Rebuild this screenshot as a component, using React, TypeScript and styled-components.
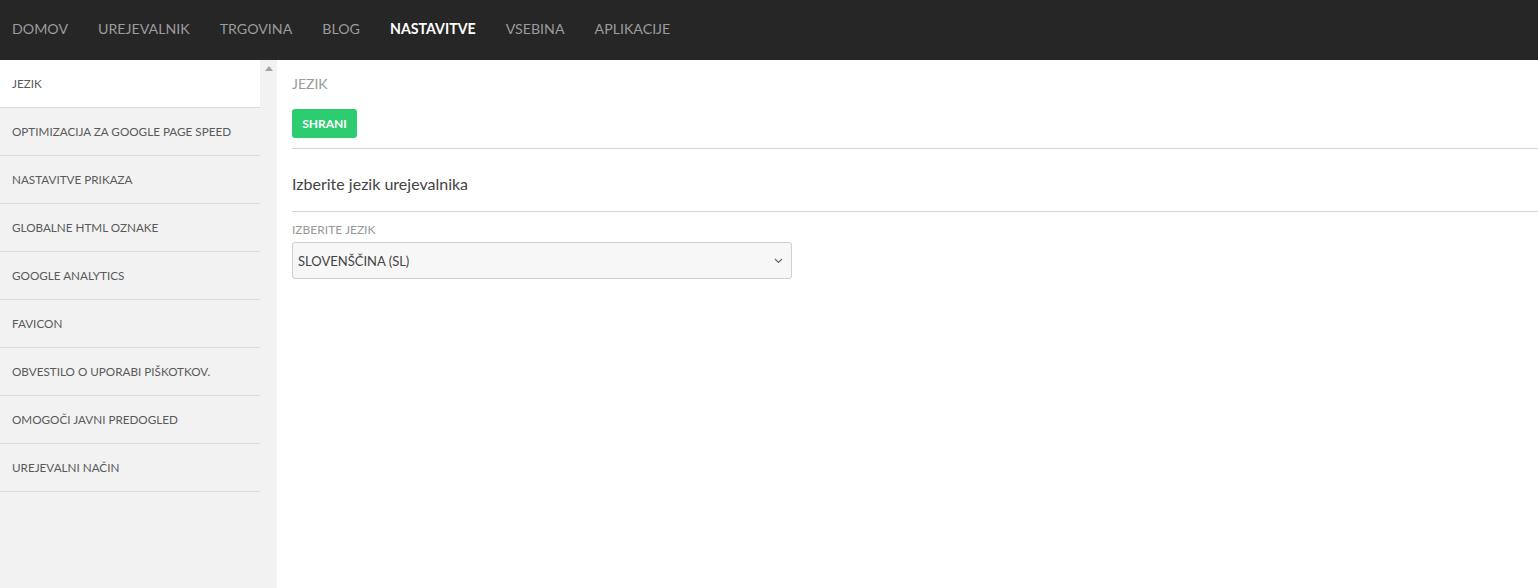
import React from 'react'
import styled, { createGlobalStyle } from 'styled-components'

const GlobalStyle = createGlobalStyle`
  html, body {
    margin: 0;
    padding: 0;
    height: 100%;
    overflow: hidden;
  }
  body {
    font-family: 'Lato', 'Noto Sans', sans-serif;
    background: #fff;
  }
  #root {
    height: 100%;
  }
`

const Page = styled.div`
  display: flex;
  flex-direction: column;
  height: 588px;
`

const TopBar = styled.nav`
  height: 60px;
  flex-shrink: 0;
  box-sizing: border-box;
  padding: 0 0 4px 12px;
  background: #262626;
  display: flex;
  align-items: center;
  gap: 30px;
`

const NavLink = styled.a<{ $active?: boolean }>`
  font-size: 14.2px;
  color: ${p => (p.$active ? '#ffffff' : '#9b9b9b')};
  font-weight: ${p => (p.$active ? 700 : 400)};
  text-decoration: none;
  cursor: pointer;
`

const Body = styled.div`
  flex: 1;
  display: flex;
  min-height: 0;
`

const Sidebar = styled.aside`
  width: 277px;
  flex-shrink: 0;
  display: flex;
  background: #f2f2f2;
`

const Menu = styled.ul`
  list-style: none;
  margin: 0;
  padding: 0;
  width: 260px;
`

const MenuItem = styled.li<{ $active?: boolean }>`
  height: 47px;
  box-sizing: border-box;
  display: flex;
  align-items: center;
  padding: 0 0 2px 12px;
  border-bottom: 1px solid #dcdcdc;
  background: ${p => (p.$active ? '#ffffff' : 'transparent')};
  font-size: 11.7px;
  color: #5a5a5a;
  cursor: pointer;
  height: 48px;
`

const ScrollTrack = styled.div`
  width: 17px;
  display: flex;
  justify-content: center;
  padding-top: 6px;
`

const Main = styled.main`
  flex: 1;
  padding: 16px 0 0 15px;
  display: flex;
  flex-direction: column;
`

const SectionTitle = styled.div`
  font-size: 14px;
  color: #9a9a9a;
  line-height: 16px;
`

const SaveButton = styled.button`
  margin-top: 17px;
  width: 65px;
  height: 29px;
  border: none;
  border-radius: 3px;
  background: #2ecc71;
  color: #fff;
  font-family: inherit;
  font-size: 12px;
  font-weight: 700;
  cursor: pointer;
  align-self: flex-start;
`

const Divider = styled.hr<{ $gap?: number }>`
  border: none;
  border-top: 1px solid #d5d5d5;
  margin: ${p => p.$gap ?? 0}px 0 0;
`

const Heading = styled.h3`
  font-size: 16px;
  font-weight: 400;
  color: #444;
  margin: 0;
  padding: 25px 0 17px;
  line-height: 20px;
`

const FieldLabel = styled.label`
  font-size: 12px;
  color: #999;
  margin-top: 11px;
  line-height: 14px;
`

const SelectBox = styled.div`
  margin-top: 5px;
  height: 35px;
  width: 485px;
  border: 1px solid #cfcfcf;
  border-radius: 3px;
  background: #f7f7f7;
  display: flex;
  align-items: center;
  justify-content: space-between;
  padding: 0 8px 0 5px;
  font-size: 13px;
  color: #444;
  cursor: pointer;
`

const menu = [
  'JEZIK',
  'OPTIMIZACIJA ZA GOOGLE PAGE SPEED',
  'NASTAVITVE PRIKAZA',
  'GLOBALNE HTML OZNAKE',
  'GOOGLE ANALYTICS',
  'FAVICON',
  'OBVESTILO O UPORABI PIŠKOTKOV.',
  'OMOGOČI JAVNI PREDOGLED',
  'UREJEVALNI NAČIN',
]

const nav = ['DOMOV', 'UREJEVALNIK', 'TRGOVINA', 'BLOG', 'NASTAVITVE', 'VSEBINA', 'APLIKACIJE']

export default function App() {
  return (
    <Page>
      <GlobalStyle />
      <TopBar>
        {nav.map(n => (
          <NavLink key={n} $active={n === 'NASTAVITVE'}>{n}</NavLink>
        ))}
      </TopBar>
      <Body>
        <Sidebar>
          <Menu>
            {menu.map((m, i) => (
              <MenuItem key={m} $active={i === 0}>{m}</MenuItem>
            ))}
          </Menu>
          <ScrollTrack>
            <svg width="8" height="5" viewBox="0 0 8 5">
              <path d="M0 5 L4 0 L8 5 Z" fill="#a3a3a3" />
            </svg>
          </ScrollTrack>
        </Sidebar>
        <Main>
          <SectionTitle>JEZIK</SectionTitle>
          <SaveButton>SHRANI</SaveButton>
          <Divider $gap={10} />
          <Heading>Izberite jezik urejevalnika</Heading>
          <Divider />
          <FieldLabel>IZBERITE JEZIK</FieldLabel>
          <SelectBox>
            <span>SLOVENŠČINA (SL)</span>
            <svg width="9" height="6" viewBox="0 0 9 6">
              <path d="M1 1 L4.5 4.5 L8 1" stroke="#666" strokeWidth="1.2" fill="none" />
            </svg>
          </SelectBox>
        </Main>
      </Body>
    </Page>
  )
}
